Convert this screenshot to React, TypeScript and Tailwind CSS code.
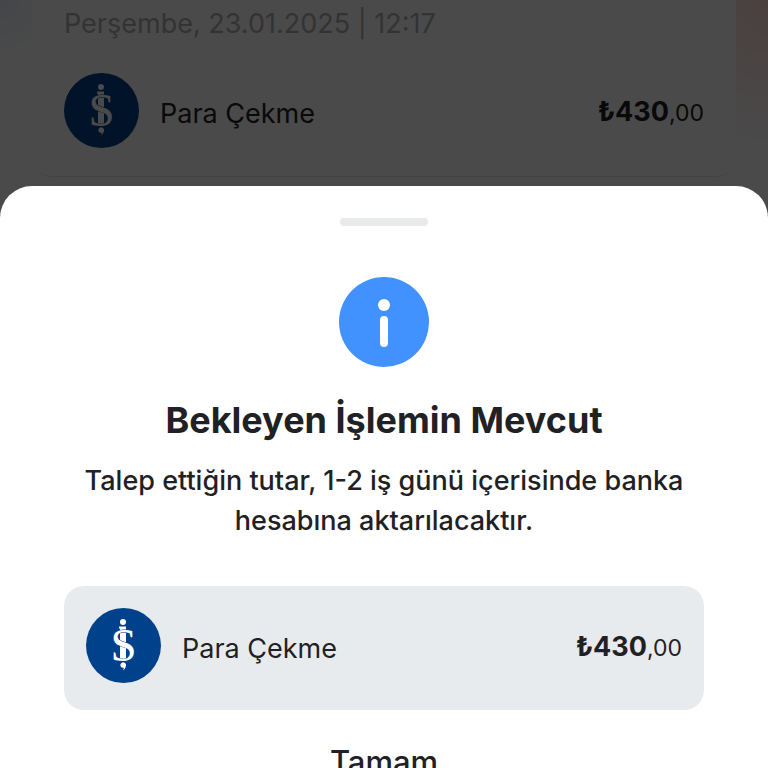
import React from 'react';

const BankLogo: React.FC = () => (
  <svg viewBox="0 0 75 75" className="size-[75px] shrink-0" role="img" aria-label="İş">
    <circle cx="37.5" cy="37.5" r="37.5" fill="#00418c" />
    <circle cx="37" cy="14" r="3" fill="#fff" />
    <path d="M33 18.500H40V50H42V51.500H32V50H34V20.500H33Z" fill="#fff" />
    <text
      x="37.5"
      y="53"
      textAnchor="middle"
      fontFamily="Liberation Serif, serif"
      fontSize="47"
      fill="#fff"
      stroke="#00418c"
      strokeWidth="1"
      paintOrder="stroke"
    >
      S
    </text>
    <path d="M34.300 57.200a2.900 2.900 0 1 1 5.400 1.500c-.5 2-1.500 3-3 3.700 1-1.200 1.200-2 1-2.700a2.900 2.900 0 0 1-3.400-2.500Z" fill="#fff" />
  </svg>
);

const InfoIcon: React.FC = () => (
  <svg viewBox="0 0 90 90" className="size-[90px]" aria-hidden="true">
    <circle cx="45" cy="45" r="45" fill="#4191fe" />
    <circle cx="45" cy="28" r="6" fill="#fff" />
    <rect x="41" y="39" width="8" height="31" rx="4" fill="#fff" />
  </svg>
);

const TransactionRow: React.FC = () => (
  <div className="flex items-center">
    <BankLogo />
    <span className="ml-[21px] pt-1.5 text-[27px] leading-8">Para Çekme</span>
    <span className="ml-auto pt-1 text-[27px] leading-8 font-bold">
      ₺430<span className="text-[23px] font-normal">,00</span>
    </span>
  </div>
);

export default function App() {
  return (
    <div className="relative flex h-screen flex-col overflow-hidden bg-white font-['Inter',sans-serif] text-[#1f2124]">
      {/* History page behind the sheet */}
      <div className="bg-[radial-gradient(circle_at_100%_0%,#ffdcd8_0px,transparent_150px),radial-gradient(circle_at_0%_0%,#eaf1ff_0px,transparent_60px)] px-8 pb-[9px]">
        <section className="rounded-b-[20px] border-b border-gray-200 bg-white px-8 pt-2 pb-7">
          <time className="block text-[27px] leading-8 text-[#b0b0b0]">Perşembe, 23.01.2025 | 12:17</time>
          <div className="pt-[33px]">
            <TransactionRow />
          </div>
        </section>
      </div>
      <div className="absolute inset-0 bg-black/71" />

      <main
        role="dialog"
        aria-labelledby="sheet-title"
        className="relative flex flex-1 flex-col items-center rounded-t-[32px] bg-white px-16 pt-8"
      >
        <div className="h-2 w-[88px] shrink-0 rounded-full bg-[#e8eaec]" />
        <div className="mt-[51px] shrink-0">
          <InfoIcon />
        </div>
        <h1 id="sheet-title" className="mt-[29px] text-center text-[36px] leading-12 font-bold">
          Bekleyen İşlemin Mevcut
        </h1>
        <p className="mt-[17px] text-center text-[27px] leading-10 font-medium">
          Talep ettiğin tutar, 1-2 iş günü içerisinde banka hesabına aktarılacaktır.
        </p>
        <div className="mt-[45px] w-full rounded-[20px] bg-[#e8ebee] px-[22px] pt-[22px] pb-[27px]">
          <TransactionRow />
        </div>
        <button type="button" className="mt-8 px-8 text-[31px] leading-10 font-medium">
          Tamam
        </button>
      </main>
    </div>
  );
}
